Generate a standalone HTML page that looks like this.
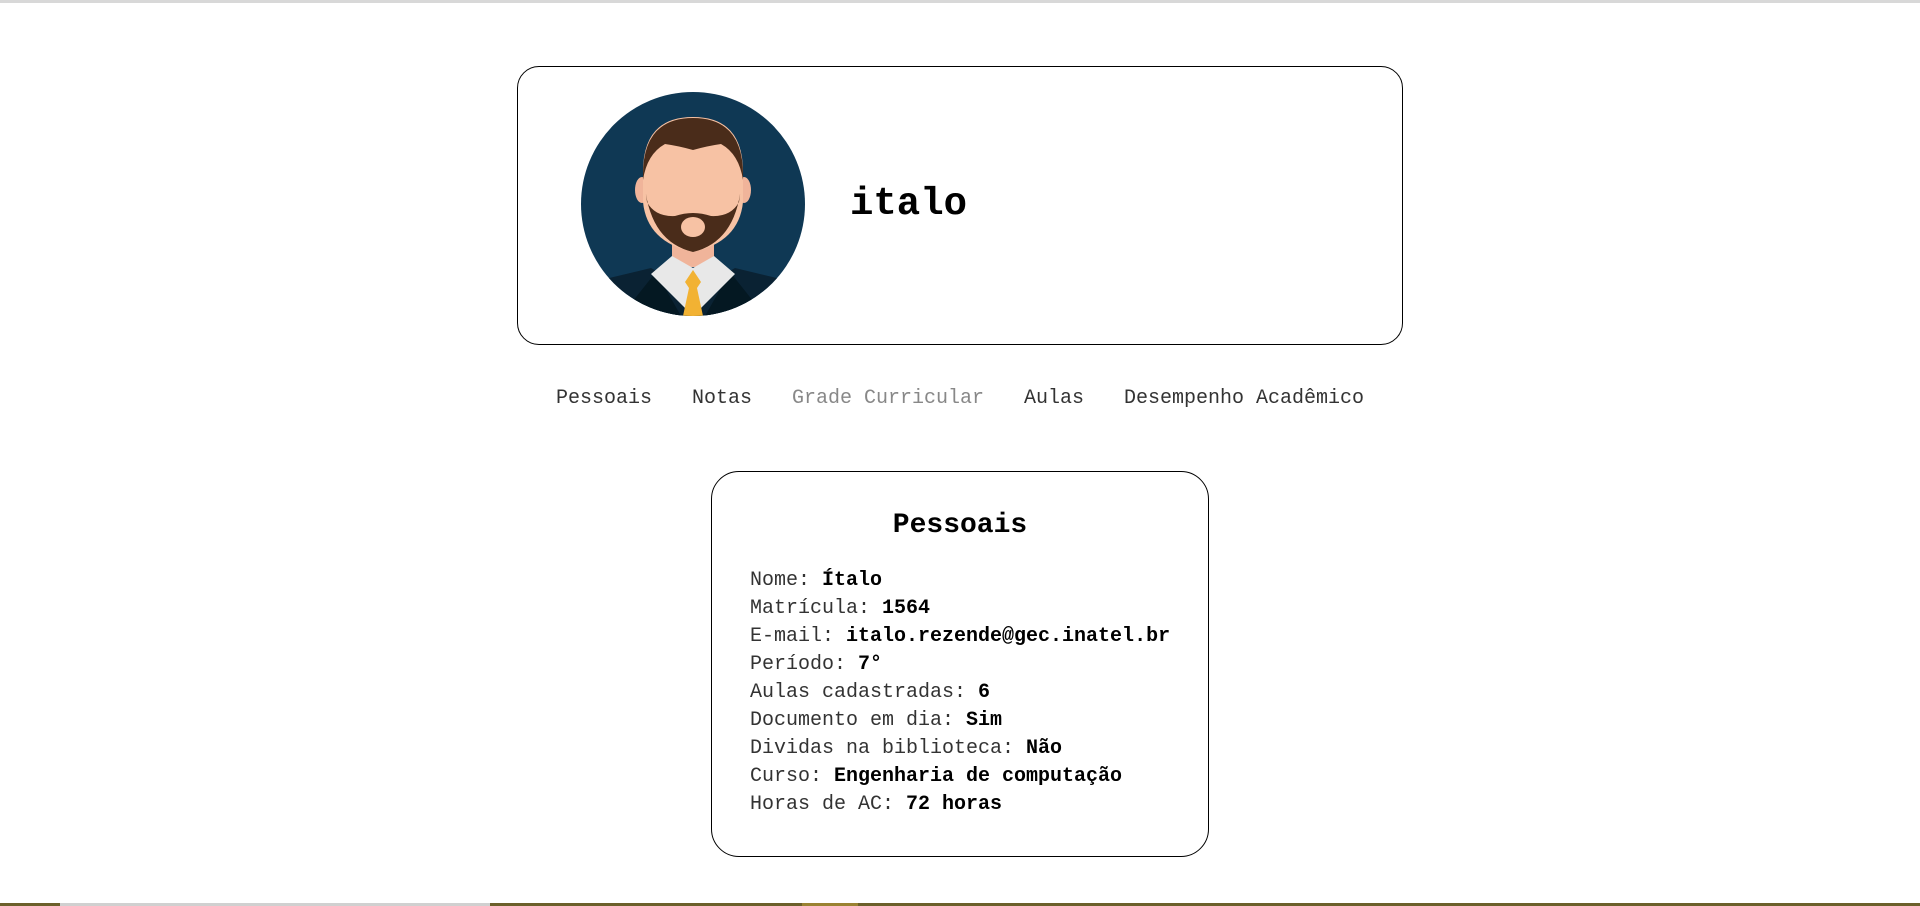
<!DOCTYPE html>
<html><head><meta charset="utf-8"><style>
html,body{margin:0;padding:0;background:#fff;width:1920px;height:906px;overflow:hidden;position:relative;font-family:"Liberation Mono",monospace}
.top{position:absolute;left:0;top:0;width:1920px;height:3px;background:#d8d8d8}
.card{position:absolute;left:517px;top:66px;width:886px;height:279px;border:1px solid #000;border-radius:22px;box-sizing:border-box}
.av{position:absolute;left:581px;top:92px;width:224px;height:224px}
.name{position:absolute;left:850px;top:183px;font-size:39px;font-weight:bold;color:#000;line-height:42px}
.nav{position:absolute;left:0;width:1920px;top:386px;display:flex;justify-content:center;gap:40px;font-size:20px;color:#333;line-height:26px}
.nav .g{color:#888}
.box{position:absolute;left:711px;top:471px;width:498px;height:386px;border:1px solid #000;border-radius:28px;box-sizing:border-box}
.box h2{margin:0;position:absolute;top:37px;left:0;width:100%;text-align:center;font-size:28px;font-weight:bold;line-height:34px}
.lines{position:absolute;left:38px;top:95px;font-size:20px;line-height:28px;color:#333;white-space:pre}
.lines b{color:#000}
.bot{position:absolute;left:0;top:903px;width:1920px;height:3px;background:#6b5f2a}
.bot i{position:absolute;top:0;height:3px}
</style></head><body>
<div class="top"></div>
<div class="card"></div>
<svg class="av" viewBox="0 0 224 224">
<defs><clipPath id="c"><circle cx="112" cy="112" r="112"/></clipPath></defs>
<circle cx="112" cy="112" r="112" fill="#0f3854"/>
<g clip-path="url(#c)">
<path d="M0 224 L20 188 L70 176 L112 200 L154 176 L204 188 L224 224Z" fill="#0a2233"/>
<path d="M40 224 L75 180 L100 224Z M184 224 L149 180 L124 224Z" fill="#041822"/>
<rect x="91" y="140" width="42" height="35" fill="#f0b49a"/>
<path d="M70 182 L91 164 L112 176 L133 164 L154 182 L112 224Z" fill="#e8e8e8"/>
<path d="M112 178 L104 190 L108 196 L102 224 L122 224 L116 196 L120 190Z" fill="#f2b233"/>
<ellipse cx="61" cy="98" rx="7" ry="13" fill="#f0b49a"/>
<ellipse cx="163" cy="98" rx="7" ry="13" fill="#f0b49a"/>
<path d="M62 80 Q62 25 112 25 Q162 25 162 80 L162 110 Q158 150 112 160 Q66 150 62 110Z" fill="#f7c2a4"/>
<path d="M62 88 Q60 26 112 26 Q164 26 162 88 Q158 62 140 52 Q126 54 112 58 Q98 54 84 52 Q66 62 62 88Z" fill="#4a2c1a"/>
<path d="M64 95 Q70 150 112 160 Q154 150 160 95 L158 110 Q150 125 130 124 Q112 118 94 124 Q74 125 66 110Z" fill="#4a2c1a"/>
<ellipse cx="112" cy="135" rx="12" ry="10" fill="#f7c2a4"/>
</g>
</svg>
<div class="name">italo</div>
<div class="nav"><span>Pessoais</span><span>Notas</span><span class="g">Grade Curricular</span><span>Aulas</span><span>Desempenho Acadêmico</span></div>
<div class="box"><h2>Pessoais</h2>
<div class="lines">Nome: <b>Ítalo</b>
Matrícula: <b>1564</b>
E-mail: <b>italo.rezende@gec.inatel.br</b>
Período: <b>7°</b>
Aulas cadastradas: <b>6</b>
Documento em dia: <b>Sim</b>
Dividas na biblioteca: <b>Não</b>
Curso: <b>Engenharia de computação</b>
Horas de AC: <b>72 horas</b></div></div>
<div class="bot"><i style="left:60px;width:430px;background:#d0d0d0"></i><i style="left:802px;width:56px;background:#9a8232"></i></div>
</body></html>
